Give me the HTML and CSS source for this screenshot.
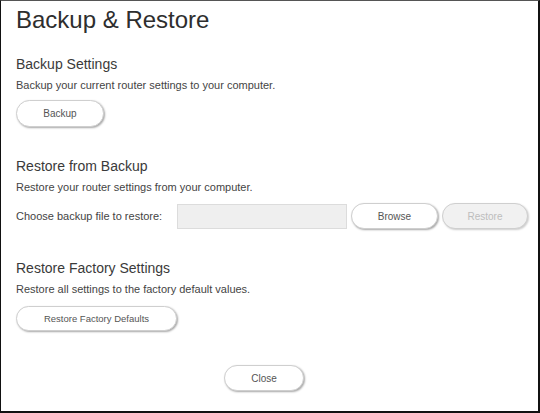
FILE: index.html
```html
<!DOCTYPE html>
<html>
<head>
<meta charset="utf-8">
<link rel="stylesheet" href="styles.css">
</head>
<body>
<div class="frame">
  <h1 class="title">Backup &amp; Restore</h1>

  <section class="section first">
    <h2 class="heading">Backup Settings</h2>
    <p class="desc">Backup your current router settings to your computer.</p>
    <div class="actions">
      <button class="btn btn-backup">Backup</button>
    </div>
  </section>

  <section class="section">
    <h2 class="heading">Restore from Backup</h2>
    <p class="desc">Restore your router settings from your computer.</p>
    <div class="file-row">
      <span class="label">Choose backup file to restore:</span>
      <div class="file-box"></div>
      <button class="btn btn-browse">Browse</button>
      <button class="btn btn-restore" disabled>Restore</button>
    </div>
  </section>

  <section class="section">
    <h2 class="heading">Restore Factory Settings</h2>
    <p class="desc">Restore all settings to the factory default values.</p>
    <div class="actions last">
      <button class="btn btn-factory">Restore Factory Defaults</button>
    </div>
  </section>

  <div class="footer">
    <button class="btn btn-close">Close</button>
  </div>
</div>
</body>
</html>
```
FILE: styles.css
```css
html, body {
  margin: 0;
  padding: 0;
  background: #fff;
}

body {
  font-family: "Liberation Sans", Arial, Helvetica, sans-serif;
  color: #444;
}

.frame {
  box-sizing: border-box;
  width: 540px;
  height: 413px;
  border-left: 1px solid #111;
  border-top: 1px solid #555;
  border-right: 2px solid #111;
  border-bottom: 2px solid #111;
  padding: 5px 0 0 15px;
  display: flex;
  flex-direction: column;
}

.title {
  margin: 0;
  font-size: 24px;
  line-height: 28px;
  font-weight: normal;
  color: #2e2e2e;
}

.section {
  display: flex;
  flex-direction: column;
  align-items: flex-start;
  margin-top: 30px;
}

.section.first {
  margin-top: 21px;
}

.heading {
  margin: 0;
  font-size: 14px;
  line-height: 18px;
  font-weight: normal;
  color: #3a3a3a;
}

.desc {
  margin: 4px 0 0;
  font-size: 11px;
  line-height: 16px;
  color: #444;
}

.actions {
  margin-top: 7px;
  display: flex;
}

.actions.last {
  margin-top: 9px;
}

.btn {
  box-sizing: border-box;
  font-family: "Liberation Sans", Arial, Helvetica, sans-serif;
  font-size: 10px;
  color: #555;
  background: #fff;
  border: 1px solid #cfcfcf;
  border-radius: 14px;
  box-shadow: 1px 1px 2px rgba(0, 0, 0, 0.35);
  padding: 0;
  height: 26px;
  cursor: pointer;
}

.btn-backup {
  width: 88px;
  height: 27px;
}

.file-row {
  margin-top: 8px;
  display: flex;
  align-items: center;
}

.label {
  font-size: 11px;
  color: #444;
  width: 161px;
}

.file-box {
  box-sizing: border-box;
  width: 170px;
  height: 25px;
  background: #efefef;
  border: 1px solid #dcdcdc;
}

.btn-browse {
  width: 87px;
  margin-left: 4px;
}

.btn-restore {
  width: 86px;
  margin-left: 4px;
  background: #f1f1f1;
  color: #bdbdbd;
  border-color: #cfcfcf;
  box-shadow: 1px 1px 2px rgba(0, 0, 0, 0.2);
  cursor: default;
}

.btn-factory {
  width: 161px;
  height: 25px;
  font-size: 9.5px;
}

.footer {
  margin-top: 34px;
  display: flex;
  padding-left: 208px;
}

.btn-close {
  width: 80px;
}
```
